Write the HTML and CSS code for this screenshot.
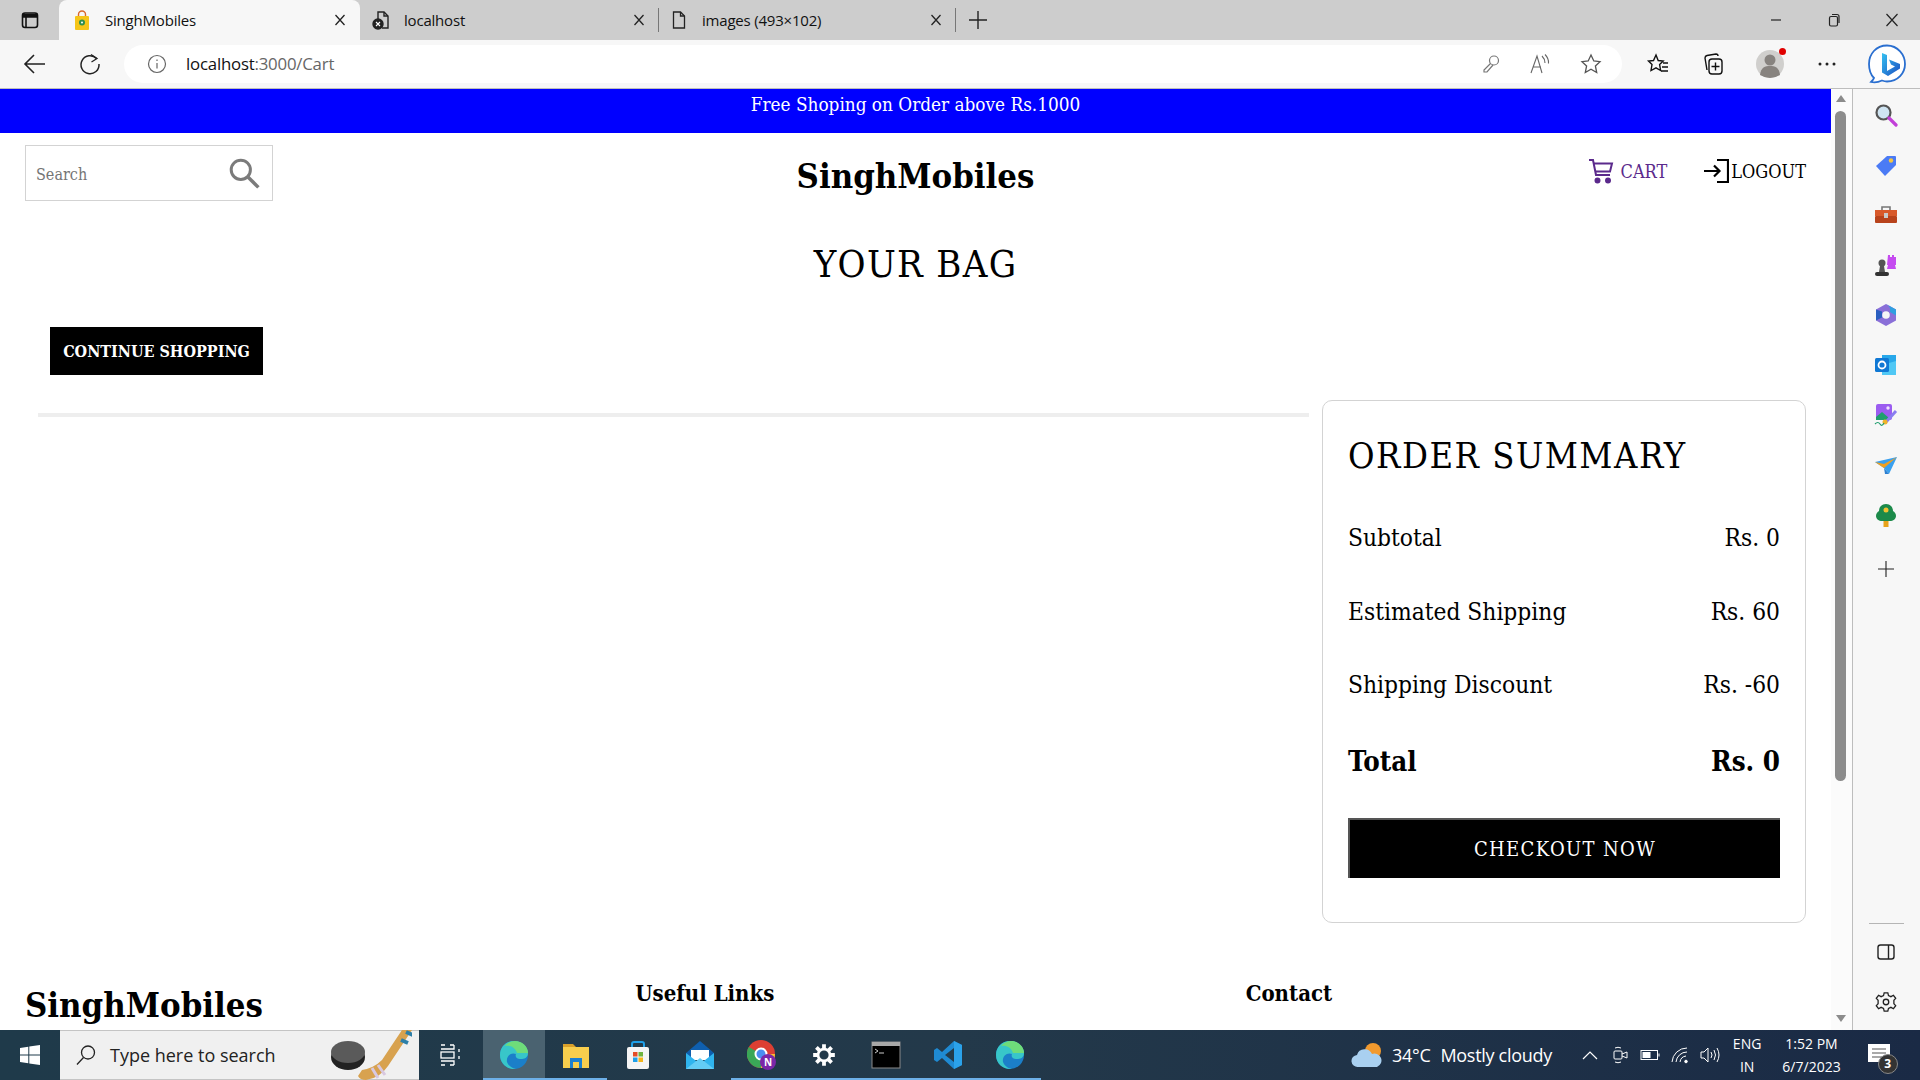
FILE: index.html
```html
<!DOCTYPE html>
<html lang="en">
<head>
<meta charset="utf-8">
<title>SinghMobiles</title>
<link rel="stylesheet" href="styles.css">
</head>
<body>
<div class="screen">
  <div class="tabstrip">
    <div class="tabs-btn"><svg class="i20" viewBox="0 0 20 20" fill="none" stroke="#111" stroke-width="1.6"><rect x="2.5" y="3" width="15" height="14.5" rx="2.5"/><path d="M3 4.5h14V7H3z" fill="#111"/><path d="M6 7v10"/></svg></div>
    <div class="tab tab-active">
      <svg class="i20" viewBox="0 0 20 20"><path d="M6.5 7V4.5a3.5 3.5 0 0 1 7 0V7" fill="none" stroke="#d9682c" stroke-width="1.4"/><rect x="3" y="6" width="14" height="14" rx="1" fill="#f5c518"/><circle cx="10" cy="12.5" r="3" fill="#2f8f4e"/><circle cx="10" cy="12.5" r="1" fill="#fff"/></svg>
      <span class="tab-title">SinghMobiles</span>
      <svg class="i12" viewBox="0 0 12 12" stroke="#222" stroke-width="1.3"><path d="M1.5 1 10.5 11M10.5 1 1.5 11"/></svg>
    </div>
    <div class="tab">
      <svg class="i20" viewBox="0 0 20 20" fill="none" stroke="#222" stroke-width="1.4"><path d="M7 9V2h6l4 4v12H11"/><path d="M13 2v4h4"/><circle cx="7" cy="14" r="5" fill="#222"/><path d="M5 12l4 4M9 12l-4 4" stroke="#fff" stroke-width="1.1"/></svg>
      <span class="tab-title">localhost</span>
      <svg class="i12" viewBox="0 0 12 12" stroke="#222" stroke-width="1.3"><path d="M1.5 1 10.5 11M10.5 1 1.5 11"/></svg>
    </div>
    <div class="tab-sep"></div>
    <div class="tab">
      <svg class="i20" viewBox="0 0 20 20" fill="none" stroke="#222" stroke-width="1.3"><path d="M4.5 2h7l4 4v12h-11z"/><path d="M11.5 2v4h4"/></svg>
      <span class="tab-title">images (493×102)</span>
      <svg class="i12" viewBox="0 0 12 12" stroke="#222" stroke-width="1.3"><path d="M1.5 1 10.5 11M10.5 1 1.5 11"/></svg>
    </div>
    <div class="tab-sep"></div>
    <div class="new-tab"><svg class="i20" viewBox="0 0 20 20" stroke="#222" stroke-width="1.4"><path d="M10 1v18M1 10h18"/></svg></div>
    <div class="win-btns">
      <svg class="i14" viewBox="0 0 14 14" stroke="#222" stroke-width="1.2"><path d="M2 7h10"/></svg>
      <svg class="i14" viewBox="0 0 14 14" fill="none" stroke="#222" stroke-width="1.2"><rect x="2.5" y="3.5" width="8" height="9.5" rx="1.5"/><path d="M5 1.5h5a2 2 0 0 1 2 2V10"/></svg>
      <svg class="i14" viewBox="0 0 14 14" stroke="#222" stroke-width="1.2"><path d="M1.5 1 12.5 13M12.5 1 1.5 13"/></svg>
    </div>
  </div>

  <div class="toolbar">
    <svg class="i24 tb-back" viewBox="0 0 24 24" fill="none" stroke="#222" stroke-width="1.6"><path d="M22 12H3M11 3l-9 9 9 9"/></svg>
    <svg class="i24 tb-reload" viewBox="0 0 24 24" fill="none" stroke="#222" stroke-width="1.5"><path d="M18.5 6.5A9 9 0 1 0 21 12"/><path d="M13 2.500 19 6.500 13.500 10" stroke-width="1.3"/></svg>
    <div class="omnibox">
      <svg class="i20" viewBox="0 0 20 20" fill="none" stroke="#666" stroke-width="1.2"><circle cx="10" cy="10" r="8.500"/><path d="M10 9v5.500M10 5.500v1.500"/></svg>
      <span class="url"><span class="url-host">localhost</span>:3000/Cart</span>
      <div class="omni-icons">
        <svg class="i20" viewBox="0 0 20 20" fill="none" stroke="#777" stroke-width="1.2"><circle cx="13" cy="6.500" r="4.500"/><path d="M9.500 9.500 3 16v2h3l6-7"/></svg>
        <svg class="i24" viewBox="0 0 24 24" fill="none" stroke="#666" stroke-width="1.1"><path d="M3 21 9 4l5 17M5 15h8"/><path d="M14 4q3 3 3 7M17 2.500q4 4 3.500 9"/></svg>
        <svg class="i24" viewBox="0 0 24 24" fill="none" stroke="#555" stroke-width="1.3"><path d="m12 3 2.800 6 6.200.7-4.600 4.300 1.300 6.500L12 17.200 6.300 20.500 7.600 14 3 9.700 9.200 9z"/></svg>
      </div>
    </div>
    <div class="tb-right">
      <svg class="i24" viewBox="0 0 24 24" fill="none" stroke="#111" stroke-width="1.4"><path d="m10 3 2.200 5.500 5 .5-3.600 3.500 1 6L10 15.800 5 18.500l1-6L2.500 9l5-.5z"/><path d="M17 11h5M16 15h6M15 19h7"/></svg>
      <svg class="i24" viewBox="0 0 24 24" fill="none" stroke="#111" stroke-width="1.4"><path d="M6 18 4 6q0-2 2-2.500L15 2q2 0 2 2"/><rect x="8" y="7" width="13" height="15" rx="3"/><path d="M14.500 10.500v8M10.500 14.500h8"/></svg>
      <div class="avatar"><svg class="i28" viewBox="0 0 28 28"><circle cx="14" cy="14" r="14" fill="#d0cfcd"/><circle cx="14" cy="10" r="5.500" fill="#87837f"/><path d="M4 25c1-8 5-9 10-9s9 1 10 9q-5 3-10 3t-10-3z" fill="#87837f"/></svg><span class="avatar-dot"></span></div>
      <svg class="i24" viewBox="0 0 24 24" fill="#222"><circle cx="5" cy="12" r="1.500"/><circle cx="12" cy="12" r="1.500"/><circle cx="19" cy="12" r="1.500"/></svg>
    </div>
    <div class="bing-cell"><svg class="bing" viewBox="0 0 40 40"><path d="M20 1.500C9 1.500 2 10 2 20c0 6 2 11 5 14-.5 1.500-2 3-3 4 4 1 8 0 11-1.500 2 .7 3.500 1 5 1 11 0 18-8.500 18-17.500S31 1.500 20 1.500z" fill="#fff" stroke="#2a6fd0" stroke-width="1.800"/><path d="M15 9l5 2v16l8-4.500-4-2-2-5 11 4.500v4.500L21 32l-6-3.500z" fill="url(#bg)"/><defs><linearGradient id="bg" x1="0" y1="0" x2="1" y2="1"><stop offset="0" stop-color="#35c1f1"/><stop offset="1" stop-color="#1b4fc2"/></linearGradient></defs></svg></div>
  </div>

  <div class="middle">
    <main class="page">
      <div class="banner">Free Shoping on Order above Rs.1000</div>
      <header class="site-header">
        <div class="header-side">
          <div class="search">
            <span class="search-ph">Search</span>
            <svg class="i32" viewBox="0 0 30 30" fill="none" stroke="#7b7b7b"><circle cx="12" cy="12" r="9" stroke-width="2.800"/><path d="m18.500 18.500 10 10" stroke-width="3.200"/></svg>
          </div>
        </div>
        <div class="logo">SinghMobiles</div>
        <div class="header-side nav">
          <a class="nav-cart">
            <svg class="i26" viewBox="0 0 26 26" fill="none" stroke="#5b2a8c" stroke-width="2"><path d="M1 2h4l3 15h14"/><path d="M6 5.500h18l-2 8H7.500"/><circle cx="9.500" cy="22.500" r="2" fill="#5b2a8c"/><circle cx="20" cy="22.500" r="2" fill="#5b2a8c"/></svg>
            <span>CART</span>
          </a>
          <a class="nav-logout">
            <svg class="i26" viewBox="0 0 26 26" fill="none" stroke="#000" stroke-width="2.200"><path d="M14 2h11v22H14"/><path d="M1 13h15M11 7.500l5.500 5.500-5.500 5.500"/></svg>
            <span>LOGOUT</span>
          </a>
        </div>
      </header>
      <h1 class="bag-title">YOUR BAG</h1>
      <div class="bag-top"><button class="btn-continue">CONTINUE SHOPPING</button></div>
      <div class="bag-body">
        <div class="bag-items"><hr class="rule"></div>
        <aside class="summary">
          <h2 class="summary-title">ORDER SUMMARY</h2>
          <div class="sum-row sum-first"><span>Subtotal</span><span>Rs. 0</span></div>
          <div class="sum-row"><span>Estimated Shipping</span><span>Rs. 60</span></div>
          <div class="sum-row"><span>Shipping Discount</span><span>Rs. -60</span></div>
          <div class="sum-row sum-total"><span>Total</span><span>Rs. 0</span></div>
          <button class="btn-checkout">CHECKOUT NOW</button>
        </aside>
      </div>
      <footer class="site-footer">
        <div class="foot-col"><div class="foot-logo">SinghMobiles</div></div>
        <div class="foot-col"><h3 class="foot-head">Useful Links</h3></div>
        <div class="foot-col"><h3 class="foot-head">Contact</h3></div>
      </footer>
    </main>
    <div class="scrollbar">
      <span class="arrow-up"></span>
      <div class="thumb"></div>
      <span class="arrow-down"></span>
    </div>
    <div class="sidebar">
      <div class="side-list">
        <div class="side-item"><svg class="i24" viewBox="0 0 24 24"><circle cx="9.500" cy="9.500" r="7" fill="#cfe4f2" stroke="#555" stroke-width="2.200"/><path d="m15 15 7 7" stroke="#c23fd8" stroke-width="3.200" stroke-linecap="round"/></svg></div>
        <div class="side-item"><svg class="i24" viewBox="0 0 24 24"><path d="M2 13 13 3h8a1 1 0 0 1 1 1v8L11 23z" fill="#4b7bf5"/><circle cx="17" cy="7.500" r="2.200" fill="#f4c542"/></svg></div>
        <div class="side-item"><svg class="i24" viewBox="0 0 24 24"><path d="M8 7V4h8v3" fill="none" stroke="#777" stroke-width="1.600"/><rect x="1" y="7" width="22" height="6" fill="#d8592a"/><rect x="1" y="13" width="22" height="7" rx="1" fill="#b8431c"/><rect x="10" y="10" width="4" height="5" fill="#c9c9c9"/></svg></div>
        <div class="side-item"><svg class="i24" viewBox="0 0 24 24"><path d="M14 2h2v2h2V2h2v2h2V2v10h-1l1 4h-9l1-4h-1z" fill="#c54bf0"/><circle cx="8" cy="10" r="3.500" fill="#555"/><path d="M6 13h4l1 6H5z" fill="#555"/><rect x="1" y="19" width="14" height="4" rx="2" fill="#333"/></svg></div>
        <div class="side-item"><svg class="i24" viewBox="0 0 24 24"><path d="M12 1 22 6.500v11L12 23 2 17.500v-11z" fill="#8a6fd8"/><path d="M12 1 22 6.500v6l-6-3.500a7 7 0 0 0-4-8z" fill="#2f9fe0"/><path d="M2 6.500v11l6-3v-6z" fill="#2a5fc0"/><circle cx="12" cy="12" r="3.800" fill="#f6f6f6"/></svg></div>
        <div class="side-item"><svg class="i24" viewBox="0 0 24 24"><path d="M8 2h14v20H8z" fill="#28a8ea"/><path d="M8 12 22 8v14H8z" fill="#50c8f5"/><rect x="1" y="5" width="14" height="14" rx="1.500" fill="#0f78d4"/><circle cx="8" cy="12" r="3.500" fill="none" stroke="#fff" stroke-width="1.800"/></svg></div>
        <div class="side-item"><svg class="i24" viewBox="0 0 24 24"><rect x="2" y="1" width="16" height="16" rx="2" fill="#9b5cf0"/><path d="M2 14l6-5 7 6v2H2z" fill="#1f9e6e"/><circle cx="14" cy="5" r="1.700" fill="#f0e0ff"/><path d="m12 19 10-11" stroke="#8a7df0" stroke-width="3"/><circle cx="11" cy="19" r="2.500" fill="#f0b429"/><path d="M1 21q3-3 5 0t4-1" fill="none" stroke="#1f9e6e" stroke-width="1.200"/></svg></div>
        <div class="side-item"><svg class="i24" viewBox="0 0 24 24"><path d="M1 9 23 4 15 21l-5-6z" fill="#3aa0ef"/><path d="M1 9l9 6 13-11-13 7z" fill="#f0a020"/><path d="m10 15 1 6 4-0z" fill="#2b7fd0"/></svg></div>
        <div class="side-item"><svg class="i24" viewBox="0 0 24 24"><rect x="9.500" y="17" width="5" height="7" fill="#e8a31a"/><path d="M12 1c5 0 7 4 7 7 2 1 3 3 3 5 0 3-3 5-6 5H8c-3 0-6-2-6-5 0-2 1-4 3-5 0-3 2-7 7-7z" fill="#1c8a4a"/><circle cx="12" cy="7" r="2.500" fill="#f2c230"/></svg></div>
        <div class="side-item side-plus"><svg class="i16" viewBox="0 0 16 16" stroke="#222" stroke-width="1.100"><path d="M8 0v16M0 8h16"/></svg></div>
      </div>
      <div class="side-bottom">
        <div class="side-div"></div>
        <div class="side-item"><svg class="i20" viewBox="0 0 20 20" fill="none" stroke="#222" stroke-width="1.400"><rect x="2" y="3" width="16" height="14" rx="2.500"/><path d="M12.500 3v14"/></svg></div>
        <div class="side-item"><svg class="i22" viewBox="0 0 24 24" fill="none" stroke="#222" stroke-width="1.400"><circle cx="12" cy="12" r="3"/><path d="m10 2h4l.7 3 2.700 1.200 2.700-1.500 2.500 3.300-2 2.200v3.600l2 2.200-2.500 3.300-2.700-1.500-2.700 1.200-.7 3h-4l-.7-3-2.700-1.200-2.700 1.500L1.400 16l2-2.200v-3.600l-2-2.200 2.500-3.300 2.700 1.500L9.300 5z"/></svg></div>
      </div>
    </div>
  </div>

  <div class="taskbar">
    <div class="start"><svg class="i20" viewBox="0 0 20 20" fill="#fff"><path d="M0 3l8.300-1.200v7.700H0zM9.300 1.600 20 0v9.500H9.300zM0 10.500h8.300v7.700L0 17zM9.300 10.500H20V20L9.300 18.400z"/></svg></div>
    <div class="tb-search">
      <svg class="i22" viewBox="0 0 22 22" fill="none" stroke="#222" stroke-width="1.300"><circle cx="13" cy="8.500" r="6.500"/><path d="M8.500 13.500 2 20.500"/></svg>
      <span class="tb-search-text">Type here to search</span>
      <svg class="stick" viewBox="0 0 82 50"><ellipse cx="18" cy="27" rx="17" ry="13" fill="#222"/><ellipse cx="18" cy="22" rx="17" ry="11" fill="#5a5a5a"/><path d="M82 0H72L52 30q-8 8-20 10l-4 6q2 4 8 4 14-2 22-14z" fill="#d8a24f"/><path d="M76 2l7 3M71 10l7 3" stroke="#2d7fa8" stroke-width="4"/><path d="M42 38l6 10M48 35l7 10" stroke="#d8c8e0" stroke-width="3"/></svg>
    </div>
    <div class="task-view"><svg class="i22" viewBox="0 0 22 22" fill="none" stroke="#fff" stroke-width="1.300"><path d="M1 1h4M10 1h4M1 5h13V1M1 21h4M10 21h4M1 17h13v4"/><rect x="1" y="8" width="13" height="6"/><path d="M19 5v3M19 12v3"/></svg></div>
    <div class="apps">
      <div class="app app-active run"><svg class="i30" viewBox="0 0 30 30"><circle cx="15" cy="15" r="14" fill="#1b7fc9"/><path d="M1 15C1 7 7 1 15 1c8 0 14 6 14 12 0 5-4 6-7 6-5 0-6-3-5-5-5-2-10 2-9 8 1 3 4 6 9 7-8 1-16-5-16-14z" fill="#38c6c9"/><path d="M16 1c7 0 13 5 13 12H18C16 7 11 5 6 6c2-3 6-5 10-5z" fill="#6fdc7a"/></svg></div>
      <div class="app run"><svg class="i30" viewBox="0 0 30 30"><path d="M2 4h10l3 3H2z" fill="#d9a02a"/><rect x="2" y="7" width="26" height="21" fill="#f8ce4d"/><path d="M9 28V18h12v10h-3v-6h-6v6z" fill="#1c80d0"/></svg></div>
      <div class="app"><svg class="i30" viewBox="0 0 30 30"><path d="M9 8V4q0-2 2-2h8q2 0 2 2v4" fill="none" stroke="#1e9fe8" stroke-width="2"/><rect x="4" y="7" width="22" height="22" rx="2" fill="#f4f4f4"/><rect x="10" y="12" width="4.500" height="4.500" fill="#e34c26"/><rect x="15.500" y="12" width="4.500" height="4.500" fill="#6eb33f"/><rect x="10" y="17.500" width="4.500" height="4.500" fill="#1e9fe8"/><rect x="15.500" y="17.500" width="4.500" height="4.500" fill="#f4b41a"/></svg></div>
      <div class="app"><svg class="i30" viewBox="0 0 30 30"><path d="M15 1 29 13v5H1v-5z" fill="#0f5fae"/><path d="M6 10h18v10H6z" fill="#fff"/><path d="M1 13 15 24 29 13v16H1z" fill="#2fb4ee"/><path d="M1 29 15 18l14 11z" fill="#63ccf5"/></svg></div>
      <div class="app run"><svg class="i30" viewBox="0 0 30 30"><circle cx="14" cy="14" r="14" fill="#dd3f33"/><path d="M14 14 1.800 7A14 14 0 0 0 14 28z" fill="#3aa757"/><path d="M14 14h14A14 14 0 0 1 14 28z" fill="#fbc02d"/><circle cx="14" cy="14" r="5.500" fill="#4a8df0" stroke="#fff" stroke-width="2"/><circle cx="21" cy="22" r="8" fill="#7b27a8"/><text class="chrome-n" x="21" y="26">N</text></svg></div>
      <div class="app run"><svg class="i26" viewBox="0 0 24 24" fill="none" stroke="#fff"><circle cx="12" cy="12" r="5.500" stroke-width="2.500"/><path d="M12 2v4M12 18v4M2 12h4M18 12h4M5 5l3 3M16 16l3 3M19 5l-3 3M8 16l-3 3" stroke-width="3.500"/></svg></div>
      <div class="app run"><svg class="i30" viewBox="0 0 30 30"><rect x="1" y="2" width="28" height="26" fill="#000" stroke="#8a8a8a"/><rect x="1" y="2" width="28" height="4" fill="#a8a8a8"/><path d="M4 9l3 2-3 2M8 13h5" stroke="#ccc" fill="none"/></svg></div>
      <div class="app run"><svg class="i30" viewBox="0 0 30 30"><path d="M21 1 29 5v20l-8 4L9 18l-5 4-3-2v-10l3-2 5 4z" fill="#1f8ad2"/><path d="M21 1 29 5v20l-8 4z" fill="#2ba2ea"/><path d="M21 8 12 15l9 7z" fill="#233b4a"/></svg></div>
      <div class="app run"><svg class="i30" viewBox="0 0 30 30"><circle cx="15" cy="15" r="14" fill="#1b7fc9"/><path d="M1 15C1 7 7 1 15 1c8 0 14 6 14 12 0 5-4 6-7 6-5 0-6-3-5-5-5-2-10 2-9 8 1 3 4 6 9 7-8 1-16-5-16-14z" fill="#38c6c9"/><path d="M16 1c7 0 13 5 13 12H18C16 7 11 5 6 6c2-3 6-5 10-5z" fill="#6fdc7a"/></svg></div>
    </div>
    <div class="tray">
      <svg class="weather" viewBox="0 0 32 26"><circle cx="22" cy="9" r="8" fill="#f29a2e"/><path d="M7 25a6 6 0 0 1-1-12 8 8 0 0 1 15-1 6.500 6.500 0 0 1 5 13z" fill="#a9d0f0"/></svg>
      <span class="temp">34°C</span>
      <span class="cond">Mostly cloudy</span>
      <svg class="tray-chev" viewBox="0 0 16 10" fill="none" stroke="#fff" stroke-width="1.200"><path d="M1 9l7-7 7 7"/></svg>
      <svg class="i18 tray-meet" viewBox="0 0 18 18" fill="none" stroke="#fff"><path d="M3 2q3-1.500 6 0M3 16q3 1.500 6 0"/><rect x="2" y="5" width="8" height="8" rx="1"/><path d="M10 8l5-2v6l-5-2"/></svg>
      <svg class="i20 tray-bat" viewBox="0 0 20 12" fill="none" stroke="#fff"><rect x="1" y="1.500" width="16.500" height="9"/><rect x="3" y="3.500" width="7" height="5" fill="#fff"/><path d="M19 4.500v3"/></svg>
      <svg class="i18 tray-wifi" viewBox="0 0 18 18" fill="none" stroke="#fff"><path d="M1 16A15 15 0 0 1 16 2M5 16A11 11 0 0 1 16 6M9 16a7 7 0 0 1 6-6"/><circle cx="15" cy="15.500" r="1.300" fill="#fff"/></svg>
      <svg class="i20 tray-vol" viewBox="0 0 20 18" fill="none" stroke="#fff"><path d="M1 6h3l4-4v14l-4-4H1z"/><path d="M11 6q2 3 0 6M14 4q3 5 0 10M17 2q4 7 0 14"/></svg>
      <div class="lang"><span>ENG</span><span>IN</span></div>
      <div class="clock"><span>1:52 PM</span><span>6/7/2023</span></div>
      <div class="notif">
        <svg class="i22" viewBox="0 0 22 22"><path d="M0 0h22v18H0z" fill="#fff"/><path d="M4 5h14M4 9h14M4 13h10" stroke="#555" stroke-width="1.200"/></svg>
        <span class="notif-badge">3</span>
      </div>
    </div>
  </div>
</div>
</body>
</html>
```

FILE: styles.css
```css
* { box-sizing: border-box; }
html, body { margin: 0; padding: 0; height: 100%; overflow: hidden; }
body { font-family: "DejaVu Serif Condensed", "Liberation Serif", serif; background: #fff; color: #000; }
svg { display: block; flex: none; }
.i12 { width: 12px; height: 12px; }
.i14 { width: 14px; height: 14px; }
.i16 { width: 16px; height: 16px; }
.i18 { width: 18px; height: 18px; }
.i20 { width: 20px; height: 20px; }
.i22 { width: 22px; height: 22px; }
.i24 { width: 24px; height: 24px; }
.i26 { width: 26px; height: 26px; }
.i28 { width: 28px; height: 28px; }
.i30 { width: 30px; height: 30px; }
.i32 { width: 32px; height: 32px; }

.screen { width: 1920px; height: 1080px; display: flex; flex-direction: column; }

.tabstrip { height: 40px; background: #cdcdcd; display: flex; align-items: flex-end; font-family: "Open Sans", sans-serif; font-size: 15px; color: #111; }
.tabs-btn { width: 59px; height: 40px; display: flex; align-items: center; padding-left: 20px; }
.tab { width: 301px; height: 40px; display: flex; align-items: center; padding: 0 14px 0 13px; gap: 13px; }
.tab-sep + .tab { width: 296px; padding-left: 10px; padding-right: 13px; }
.tab-active { background: #f7f7f7; border-radius: 8px 8px 0 0; }
.tab-active + .tab { width: 298px; padding-left: 11px; padding-right: 13px; }
.tab-title { flex: 1; white-space: nowrap; letter-spacing: -0.2px; }
.tab-sep { width: 1px; height: 24px; background: #777; margin-bottom: 8px; }
.new-tab { width: 44px; height: 40px; display: flex; align-items: center; padding-left: 12px; }
.win-btns { margin-left: auto; width: 152px; height: 40px; display: flex; align-items: center; justify-content: space-between; padding: 0 21px 0 1px; }

.toolbar { height: 49px; background: #f7f7f7; border-bottom: 1px solid #bdbdbd; display: flex; align-items: center; font-family: "Open Sans", sans-serif; }
.tb-back { margin-left: 23px; }
.tb-reload { margin-left: 31px; }
.omnibox { margin-left: 22px; width: 1498px; height: 38px; margin-top: -1px; background: #fff; border-radius: 19px; display: flex; align-items: center; padding: 0 19px 0 23px; }
.url { margin-left: 19px; font-size: 16.800px; color: #666; letter-spacing: -0.2px; }
.url-host { color: #111; }
.omni-icons { margin-left: auto; display: flex; align-items: center; gap: 27px; }
.tb-right { margin-left: 24px; display: flex; align-items: center; gap: 31px; }
.avatar { position: relative; }
.avatar-dot { position: absolute; right: -2px; top: -2px; width: 7px; height: 7px; border-radius: 50%; background: #e00000; }
.bing-cell { margin-left: auto; width: 67px; display: flex; justify-content: center; }
.bing { width: 40px; height: 40px; }

.middle { flex: 1; min-height: 0; display: flex; }
.page { flex: 1; min-width: 0; overflow: hidden; background: #fff; }
.banner { height: 44px; background: #0000ff; color: #fff; text-align: center; font-size: 18.800px; padding-top: 4px; line-height: 23px; }

.site-header { display: flex; justify-content: space-between; align-items: flex-start; padding: 12px 25px 0; height: 88px; }
.header-side { width: 400px; display: flex; }
.search { width: 248px; height: 56px; border: 1px solid #d3d3d3; display: flex; align-items: center; justify-content: space-between; padding: 0 12px 0 10px; }
.search-ph { font-size: 16px; color: #757575; margin-top: 2px; }
.logo { font-size: 34.400px; font-weight: 700; line-height: 48px; margin-top: 7px; }
.nav { justify-content: flex-end; align-items: center; gap: 36px; margin-top: 13px; font-size: 18px; }
.nav a { display: flex; align-items: center; }
.nav-cart { color: #5b2a8c; gap: 7px; }
.nav-logout { color: #000; gap: 2px; }

.bag-title { margin: 0; text-align: center; font-weight: 400; font-size: 38px; letter-spacing: 1.300px; line-height: 46px; padding-top: 20px; }
.bag-top { padding: 40px 50px 0; }
.btn-continue { width: 213px; height: 48px; background: #000; color: #fff; border: 0; font: 700 16px "DejaVu Serif Condensed", "Liberation Serif", serif; padding: 1px 0 0; }

.bag-body { display: flex; padding: 25px 25px 0 38px; gap: 13px; }
.bag-items { flex: 1; min-width: 0; }
.rule { margin: 13px 0 0; border: 0; height: 4px; background: #eee; }
.summary { width: 484px; height: 523px; flex: none; border: 1px solid #d3d3d3; border-radius: 10px; padding: 33px 25px 0; }
.summary-title { margin: 0; font-weight: 400; font-size: 36px; letter-spacing: 1.500px; line-height: 44px; }
.sum-row { display: flex; justify-content: space-between; font-size: 24.300px; line-height: 30px; margin-top: 43.500px; }
.sum-first { margin-top: 45px; }
.sum-total { font-weight: 700; font-size: 27.500px; line-height: 36px; margin-top: 42.500px; }
.btn-checkout { display: block; width: 100%; height: 60px; margin-top: 39px; background: #000; color: #fff; border: 2px outset #555; border-bottom: 0; border-right: 0; font: 400 20px "DejaVu Serif Condensed", "Liberation Serif", serif; letter-spacing: 1.350px; padding: 0; }

.site-footer { display: flex; padding-top: 55px; }
.foot-col { flex: 1; padding: 0 25px; }
.foot-logo { font-size: 34.400px; font-weight: 700; line-height: 48px; margin-top: 3px; }
.foot-head { margin: 0; font-size: 22px; line-height: 30px; font-weight: 700; }

.scrollbar { width: 22px; background: #fbfbfb; border-right: 1px solid #bdbdbd; display: flex; flex-direction: column; align-items: center; padding: 6px 2px 8px 0; }
.arrow-up { width: 0; height: 0; border: 5px solid transparent; border-top: 0; border-bottom: 7px solid #8c8c8c; }
.thumb { width: 11px; height: 670px; background: #8c8c8c; border-radius: 6px; margin-top: 9px; }
.arrow-down { margin-top: auto; width: 0; height: 0; border: 5px solid transparent; border-bottom: 0; border-top: 7px solid #8c8c8c; }

.sidebar { width: 67px; background: #f7f7f7; display: flex; flex-direction: column; justify-content: space-between; }
.side-list { padding-top: 1px; }
.side-item { height: 50px; display: flex; align-items: center; justify-content: center; padding-right: 1px; }
.side-plus { margin-top: 4px; }
.side-bottom { padding-bottom: 3px; }
.side-div { height: 1px; width: 35px; background: #b5b5b5; margin: 0 0 3px 16px; }

.taskbar { height: 50px; background: linear-gradient(90deg, #1f3a4a, #23394a 50%, #1a2a45); color: #fff; display: flex; align-items: center; font-family: "Open Sans", sans-serif; }
.start { width: 60px; height: 50px; display: flex; align-items: center; justify-content: center; }
.tb-search { width: 359px; height: 50px; background: #f0f0f0; border-top: 1px solid #c4c4c4; border-bottom: 1px solid #c4c4c4; display: flex; align-items: center; padding-left: 15px; color: #222; }
.tb-search-text { margin-left: 13px; font-size: 18px; }
.stick { width: 82px; height: 50px; margin-left: auto; margin-right: 7px; }
.task-view { width: 64px; height: 50px; display: flex; align-items: center; padding-left: 21px; }
.apps { display: flex; }
.app { width: 62px; height: 50px; display: flex; align-items: center; justify-content: center; border-bottom: 2px solid transparent; padding-top: 2px; }
.app.run { border-bottom: 2px solid #6db0e8; background-clip: padding-box; }
.app-active { background-color: #4a6270; }
.chrome-n { font: 700 10px "Open Sans", sans-serif; fill: #fff; text-anchor: middle; }
.tray { flex: 1; display: flex; align-items: center; padding-left: 310px; font-size: 18px; }
.weather { width: 32px; height: 26px; }
.temp { margin-left: 9px; letter-spacing: -0.300px; }
.cond { margin-left: 10px; letter-spacing: -0.300px; }
.tray-chev { width: 16px; height: 10px; margin-left: 30px; }
.tray-meet { margin-left: 14px; }
.tray-bat { margin-left: 10px; height: 12px; }
.tray-wifi { margin-left: 11px; }
.tray-vol { margin-left: 11px; }
.lang, .clock { display: flex; flex-direction: column; align-items: center; font-size: 14px; line-height: 23px; }
.lang { margin-left: 13px; }
.clock { margin-left: 21px; }
.notif { margin-left: 27px; position: relative; }
.notif-badge { position: absolute; right: -8px; bottom: -8px; width: 20px; height: 20px; border-radius: 50%; background: #333; border: 1px solid #888; font-size: 12px; font-weight: 700; line-height: 18px; text-align: center; }
```
